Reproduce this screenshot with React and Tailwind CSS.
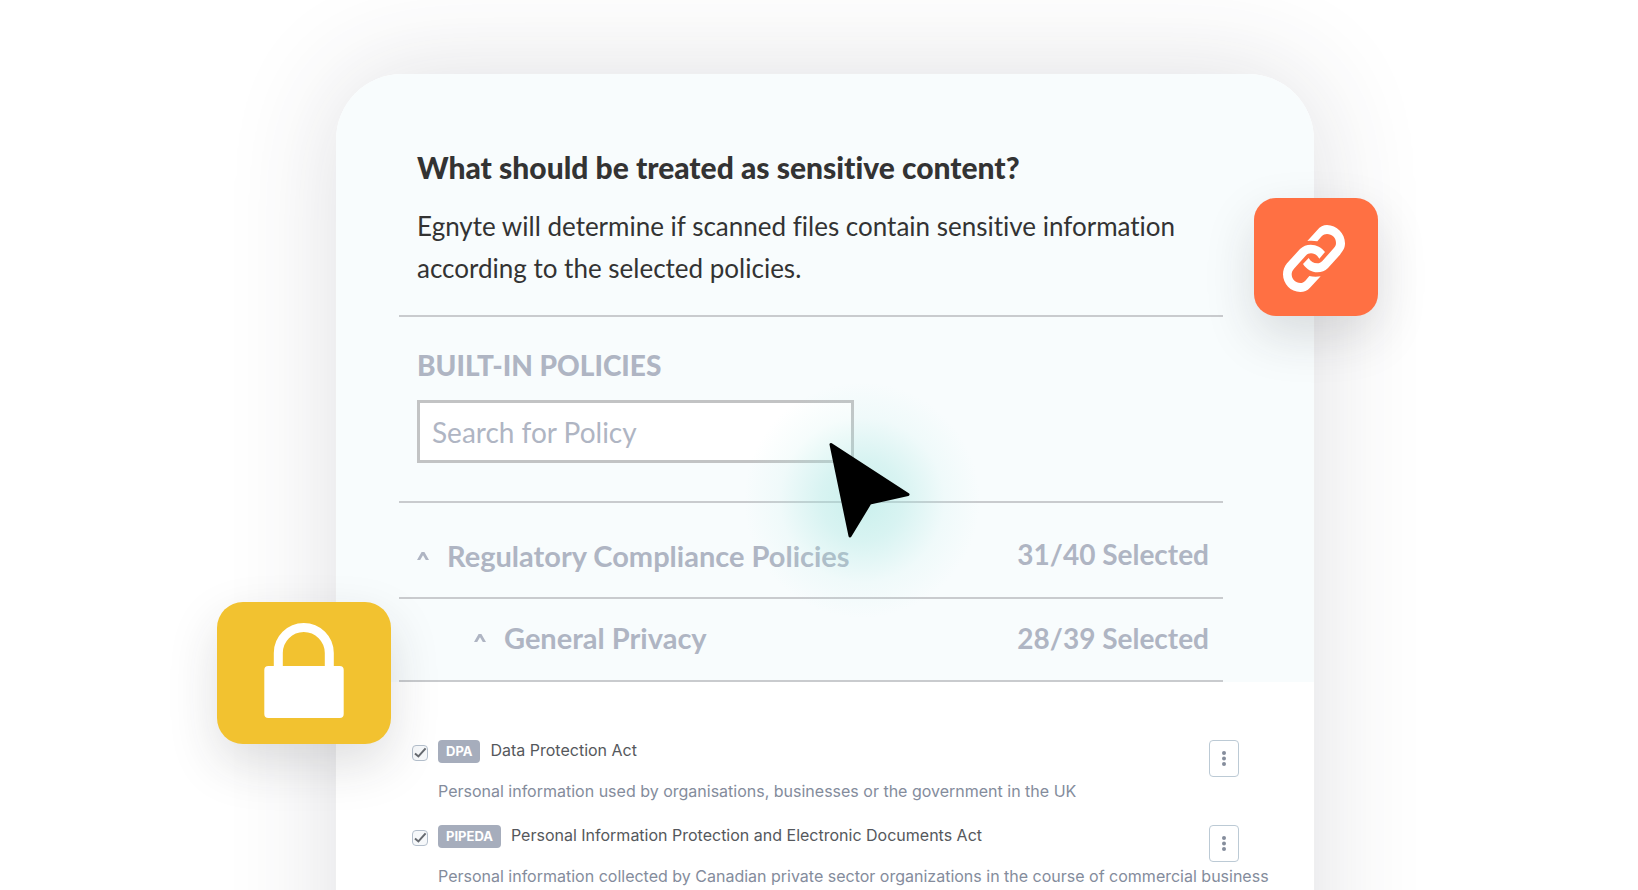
import React, { useState } from 'react';

const policies = [
    {
        id: 'dpa',
        code: 'DPA',
        title: 'Data Protection Act',
        description: 'Personal information used by organisations, businesses or the government in the UK',
    },
    {
        id: 'pipeda',
        code: 'PIPEDA',
        title: 'Personal Information Protection and Electronic Documents Act',
        description: 'Personal information collected by Canadian private sector organizations in the course of commercial business',
    },
];

function Caret() {
    return (
        <svg className="w-3 h-2 shrink-0" viewBox="0 0 12 8" fill="currentColor" aria-hidden="true">
            <path d="M0 8 L4.6 0 H7.4 L12 8 H8.8 L6 3.2 L3.2 8 Z" />
        </svg>
    );
}

function PolicyRow({ policy }) {
    const [checked, setChecked] = useState(true);

    return (
        <li className="flex items-start h-[85px] font-['Inter',sans-serif]">
            <span className="relative mt-[5px] size-4 shrink-0">
                <input
                    id={policy.id}
                    type="checkbox"
                    checked={checked}
                    onChange={(e) => setChecked(e.target.checked)}
                    className="block size-4 appearance-none rounded-sm border border-[#b4bfcc] bg-[#f6f8fa]"
                />
                {checked && (
                    <svg className="absolute inset-0 size-4 pointer-events-none" viewBox="0 0 16 16" fill="none" stroke="#666a70" strokeWidth="2">
                        <path d="M3 8.5 L6.4 11.4 L13.6 3.4" />
                    </svg>
                )}
            </span>
            <div className="ml-[10px] flex-1 min-w-0">
                <label htmlFor={policy.id} className="flex items-start gap-[10px]">
                    <span className="h-[23px] px-2 rounded bg-[#a6adbc] text-white text-[13px] leading-[22px] font-bold">{policy.code}</span>
                    <span className="text-base leading-[20px] text-[#55585c]">{policy.title}</span>
                </label>
                <p className="mt-[17px] text-base leading-[22px] whitespace-nowrap text-[#848c9c]">{policy.description}</p>
            </div>
            <button
                type="button"
                aria-label={`Options for ${policy.title}`}
                className="flex h-[37px] w-[30px] shrink-0 items-center justify-center rounded border border-[#bccad5] bg-white text-[#858d9c]"
            >
                <svg className="w-1 h-4" viewBox="0 0 4 16" fill="currentColor">
                    <circle cx="2" cy="2" r="2" />
                    <circle cx="2" cy="7.5" r="2" />
                    <circle cx="2" cy="13" r="2" />
                </svg>
            </button>
        </li>
    );
}

function LinkBadge() {
    return (
        <div className="absolute top-[124px] -right-16 h-[118px] w-[124px] rounded-[22px] bg-[#ff7043] shadow-[0_20px_50px_rgba(40,40,50,0.15)]">
            <svg className="size-full" viewBox="72 54 372 354" fill="#fff" aria-hidden="true">
                <path d="M232 183 L262 150 C270 140 280 135 291 135 C320 135 345 160 345 190 C345 205 338 214 330 224 L294 264 C285 273 275 277 262 277 C245 277 230 268 219 252 L236 234 C243 245 250 250 262 250 C268 250 272 248 277 243 L311 205 C316 199 318 195 318 189 C318 173 306 162 291 162 C285 162 280 164 275 169 L262 184 C252 182 242 182 232 183 Z" />
                <path d="M272 289 L240 323 C232 332 222 336 211 336 C182 336 159 312 159 283 C159 270 163 260 171 250 L210 207 C219 198 230 194 242 194 C260 194 275 203 285 216 L268 236 C262 226 254 220 243 220 C237 220 232 222 227 227 L192 266 C187 272 185 277 185 283 C185 298 197 309 211 309 C217 309 221 307 226 302 L238 288 C248 291 262 291 272 289 Z" />
            </svg>
        </div>
    );
}

function LockBadge() {
    return (
        <div className="absolute top-[528px] -left-[119px] h-[142px] w-[174px] rounded-[26px] bg-[#f2c230] shadow-[0_20px_50px_rgba(40,40,50,0.15)]">
            <svg className="size-full" viewBox="0 0 174 142" aria-hidden="true">
                <rect x="47.3" y="64" width="79.4" height="52" rx="4" fill="#fff" />
                <path d="M61.3 66 V51 A25.5 25.5 0 0 1 112.3 51 V66" fill="none" stroke="#fff" strokeWidth="9" />
            </svg>
        </div>
    );
}

function Cursor() {
    return (
        <div className="absolute top-[308px] left-[408px] size-[236px] pointer-events-none bg-[radial-gradient(closest-side,rgba(150,226,218,0.48)_0%,rgba(160,228,222,0.36)_35%,rgba(180,235,230,0.12)_70%,rgba(255,255,255,0)_100%)]">
            <svg className="size-full" viewBox="744 382 236 236" aria-hidden="true">
                <path d="M831 444.5 L908 494.5 L870 503 L850 536 Z" stroke="#000" strokeWidth="3" strokeLinejoin="round" />
            </svg>
        </div>
    );
}

function App() {
    const [query, setQuery] = useState('');

    return (
        <main className="h-screen overflow-hidden bg-white pt-[74px] pl-3 font-['Lato',sans-serif] [font-variant-ligatures:none]">
            <div className="relative mx-auto w-full max-w-[978px] min-h-[1100px] rounded-t-[66px] bg-white shadow-[0_0_110px_rgba(50,50,70,0.16)]">
                <section className="rounded-t-[66px] bg-[#f8fcfd] pt-[75px] pr-[91px] pl-[63px] text-[#afb5c3]">
                    <header className="border-b-2 border-[#c9cbce] pb-[26px] pl-[18px] text-[#333]">
                        <h1 className="text-[30px] leading-9 font-black">What should be treated as sensitive content?</h1>
                        <p className="mt-5 text-[26px] leading-[42px]">
                            Egnyte will determine if scanned files contain sensitive information
                            <br />
                            according to the selected policies.
                        </p>
                    </header>

                    <div className="border-b-2 border-[#c9cbce] pt-[30px] pb-[38px] pl-[18px]">
                        <label htmlFor="policy-search" className="block text-[28px] leading-9 font-black">BUILT-IN POLICIES</label>
                        <input
                            id="policy-search"
                            type="text"
                            value={query}
                            onChange={(e) => setQuery(e.target.value)}
                            placeholder="Search for Policy"
                            className="mt-[17px] block h-[63px] w-[437px] border-3 border-[#c2c3c4] bg-white px-3 text-[28px] placeholder:text-[#afb5c3]"
                        />
                    </div>

                    <div className="flex h-24 items-center justify-between border-b-2 border-[#c9cbce] pt-3 pr-[14px] pl-[18px] text-[28px] leading-9 font-bold">
                        <button type="button" className="flex items-center gap-[18px] text-[29px]">
                            <Caret />
                            Regulatory Compliance Policies
                        </button>
                        <span className="pb-1">31/40 Selected</span>
                    </div>

                    <div className="flex h-[83px] items-center justify-between border-b-2 border-[#c9cbce] pr-[14px] pb-1 pl-[75px] text-[28px] leading-9 font-bold">
                        <button type="button" className="flex items-center gap-[18px] text-[29px]">
                            <Caret />
                            General Privacy
                        </button>
                        <span>28/39 Selected</span>
                    </div>
                </section>

                <ul className="mr-[75px] ml-[76px] pt-[58px]">
                    {policies.map((policy) => (
                        <PolicyRow key={policy.id} policy={policy} />
                    ))}
                </ul>

                <Cursor />
                <LinkBadge />
                <LockBadge />
            </div>
        </main>
    );
}

export default App;
